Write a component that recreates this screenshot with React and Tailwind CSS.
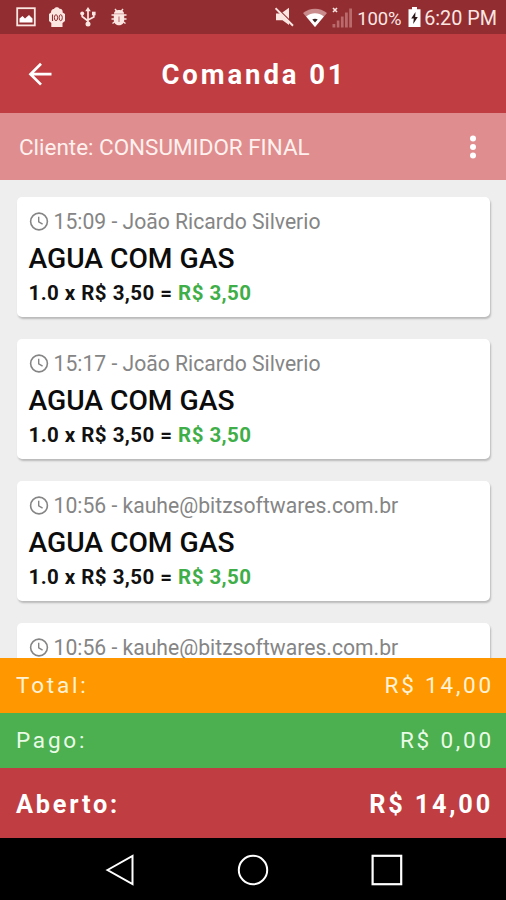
import React from "react";

const orders = [
  { time: "15:09", user: "João Ricardo Silverio" },
  { time: "15:17", user: "João Ricardo Silverio" },
  { time: "10:56", user: "kauhe@bitzsoftwares.com.br" },
  { time: "10:56", user: "kauhe@bitzsoftwares.com.br" },
];

const StatusBar = () => {
  return (
    <div className="flex h-[34px] shrink-0 items-center justify-between bg-[#922d31] pl-4 pr-[9px] text-[#fbe6e2]">
      <div className="flex items-center">
        <svg width="20" height="20" viewBox="0 0 20 20" fill="none">
          <rect x="1.2" y="1.2" width="17.6" height="17.2" stroke="currentColor" strokeWidth="1.8" />
          <path d="M3.5 15.5V11.5L6.5 9L9 11.5L13 8L16.5 11.5V15.5Z" fill="#fff" />
        </svg>
        <svg className="ml-3" width="18" height="20" viewBox="0 0 18 20">
          <path
            d="M3 5.5C3 3 4.5 1.8 6 2C7 0 10 -0.3 11.5 1.8C13.5 1.6 15 3 14.6 5.5L17 7V14L14.5 16V20H3.3V16L1 14V7Z"
            fill="currentColor"
          />
          <path d="M4.5 7.5V14" stroke="#922d31" strokeWidth="1.1" />
          <ellipse cx="8" cy="10.7" rx="1.6" ry="3" fill="none" stroke="#922d31" strokeWidth="1" />
          <ellipse cx="12.7" cy="10.7" rx="1.6" ry="3" fill="none" stroke="#922d31" strokeWidth="1" />
        </svg>
        <svg className="ml-[14px]" width="16" height="20" viewBox="0 0 16 20" fill="none">
          <path d="M8 3V17M2.2 6.5V9.5L8 14M13.8 7V10L8 13" stroke="currentColor" strokeWidth="1.7" />
          <path d="M8 0L10.8 4.2H5.2Z" fill="currentColor" />
          <circle cx="2.2" cy="6.5" r="2" fill="currentColor" />
          <rect x="12" y="4.7" width="3.6" height="3.6" fill="currentColor" />
          <circle cx="8" cy="17" r="2.5" fill="currentColor" />
        </svg>
        <svg className="ml-[15px]" width="16" height="18" viewBox="0 0 16 18" fill="none">
          <path
            d="M4 1L6 3.5M12 1L10 3.5M0.5 7H15.5M0.5 11H15.5M1.5 15.5L4 13.5M14.5 15.5L12 13.5"
            stroke="currentColor"
            strokeWidth="1.4"
          />
          <path d="M3 5.8C3 0.8 13 0.8 13 5.8Z" fill="currentColor" />
          <path d="M2.8 6.5H13.2V12C13.2 19 2.8 19 2.8 12Z" fill="currentColor" />
          <path d="M8 8.5V14" stroke="#922d31" strokeWidth="0.7" />
        </svg>
      </div>
      <div className="flex items-center">
        <svg width="19" height="20" viewBox="0 0 19 20">
          <path d="M1 6.5H6L14 0.8V18L7.5 13.2H1Z" fill="currentColor" />
          <path d="M1 0.2L18.5 17.4" stroke="#922d31" strokeWidth="1.6" />
          <path d="M0.5 1.2L18 18.7" stroke="currentColor" strokeWidth="2" />
        </svg>
        <svg className="ml-[9px]" width="24" height="19" viewBox="0 0 24 19">
          <path d="M0 5C7 -0.8 17 -0.8 24 5L12 19Z" fill="#c98b8b" />
          <path d="M3.2 8.5C8.5 4.3 15.5 4.3 20.8 8.5L12 19Z" fill="#fff" />
          <path d="M9.3 11.5C10.6 10.5 13.4 10.5 14.7 11.5L12 14.5Z" fill="#3c2324" />
        </svg>
        <svg className="ml-[5px]" width="21" height="21" viewBox="0 0 21 21">
          <path d="M1 1L5 5M5 1L1 5" stroke="currentColor" strokeWidth="1.6" />
          <path
            d="M0.5 17H3.3V20.5H0.5ZM4.8 13.5H7.4V20.5H4.8ZM8.9 9.5H11.6V20.5H8.9ZM13 5.5H15.8V20.5H13ZM17.2 1.5H20V20.5H17.2Z"
            fill="#b96a6b"
          />
        </svg>
        <span className="ml-1 w-[45px] whitespace-nowrap pt-[3px] text-[18.5px] leading-5 tracking-[-0.1px]">100%</span>
        <svg className="ml-[6px]" width="13" height="20" viewBox="0 0 13 20">
          <path d="M4 0H9V2.2H12.5V20H0.5V2.2H4Z" fill="#fff" />
          <path d="M7.5 5L3.2 11.5H5.8L5.2 17L9.8 10H7.2Z" fill="#2b1718" />
        </svg>
        <span className="ml-[3px] whitespace-nowrap pt-[3px] text-[19.8px] leading-5">6:20 PM</span>
      </div>
    </div>
  );
};

const Header = () => {
  return (
    <div className="grid h-[79px] shrink-0 grid-cols-[80px_1fr_80px] items-center bg-[#c03d41] text-white">
      <svg className="ml-7" width="24" height="24" viewBox="0 0 24 24" fill="none">
        <path d="M13 1.8L2.5 12.2L13 22.6M2.5 12.2H23.5" stroke="currentColor" strokeWidth="2.7" />
      </svg>
      <h1 className="pl-0.5 pt-0.5 text-center text-[27.5px] font-bold leading-8 tracking-[2.9px]">Comanda 01</h1>
    </div>
  );
};

const OrderCard = ({ time, user }) => {
  return (
    <div className="h-[120px] shrink-0 rounded-[5px] bg-white pl-[11.5px] pt-3 shadow-[1px_2px_2px_rgba(0,0,0,0.22)]">
      <div className="flex h-6 items-center text-[#858585]">
        <svg width="20" height="20" viewBox="0 0 20 20" fill="none" stroke="currentColor">
          <circle cx="10" cy="10.5" r="8.4" strokeWidth="1.6" />
          <path d="M9.7 5.7V10.8L13.6 13.2" strokeWidth="1.4" />
        </svg>
        <span className="ml-[5px] whitespace-nowrap pt-0.5 text-[21.15px] leading-6">
          {time} - {user}
        </span>
      </div>
      <h2 className="mt-[10px] h-8 text-[28.2px] font-medium leading-8 text-[#0c0c0c]">AGUA COM GAS</h2>
      <p className="mt-[6px] text-[20.5px] font-bold leading-6 tracking-[0.45px] text-[#111]">
        1.0 x R$ 3,50 = <span className="text-[#3fae49]">R$ 3,50</span>
      </p>
    </div>
  );
};

export default function App() {
  return (
    <div className="flex h-[900px] w-[506px] flex-col overflow-hidden bg-[#eeeeee] font-['Roboto',sans-serif]">
      <StatusBar />
      <Header />
      <div className="flex h-[67px] shrink-0 items-center justify-between bg-[#df8d8f] pl-[19px] pr-[29px] text-[#fff1ee]">
        <span className="pt-0.5 text-[22.45px]">Cliente: CONSUMIDOR FINAL</span>
        <svg width="8" height="24" viewBox="0 0 8 24" fill="#fff">
          <circle cx="4" cy="3.5" r="3" />
          <circle cx="4" cy="12" r="3" />
          <circle cx="4" cy="20.5" r="3" />
        </svg>
      </div>
      <div className="flex h-[478px] shrink-0 flex-col gap-[22px] overflow-hidden pl-[17px] pr-4 pt-[17px]">
        {orders.map((order, index) => (
          <OrderCard key={index} time={order.time} user={order.user} />
        ))}
      </div>
      <div className="flex h-[55px] shrink-0 items-center justify-between bg-[#ff9800] pl-4 pr-3 text-[22.5px] tracking-[2.8px] text-[#fff3d6]">
        <span>Total:</span>
        <span>R$ 14,00</span>
      </div>
      <div className="flex h-[55px] shrink-0 items-center justify-between bg-[#4caf50] pl-4 pr-3 text-[22.5px] tracking-[2.8px] text-[#e9fbe6]">
        <span>Pago:</span>
        <span>R$ 0,00</span>
      </div>
      <div className="flex h-[70px] shrink-0 items-center justify-between bg-[#c03d41] pl-4 pr-[13px] pt-[3px] text-[25.3px] font-bold tracking-[2.8px] text-white">
        <span>Aberto:</span>
        <span>R$ 14,00</span>
      </div>
      <div className="flex h-[62px] shrink-0 items-center bg-black pl-[105px] pt-px">
        <svg width="30" height="32" viewBox="0 0 30 32" fill="none" stroke="#fff" strokeWidth="2">
          <path d="M2.5 16L27.5 2V30Z" />
        </svg>
        <svg className="ml-[102px]" width="32" height="32" viewBox="0 0 32 32" fill="none" stroke="#fff" strokeWidth="2">
          <circle cx="16" cy="16" r="14.2" />
        </svg>
        <svg className="ml-[102px]" width="32" height="32" viewBox="0 0 32 32" fill="none" stroke="#fff" strokeWidth="2.2">
          <rect x="1.6" y="1.8" width="28.6" height="28.4" />
        </svg>
      </div>
    </div>
  );
}
